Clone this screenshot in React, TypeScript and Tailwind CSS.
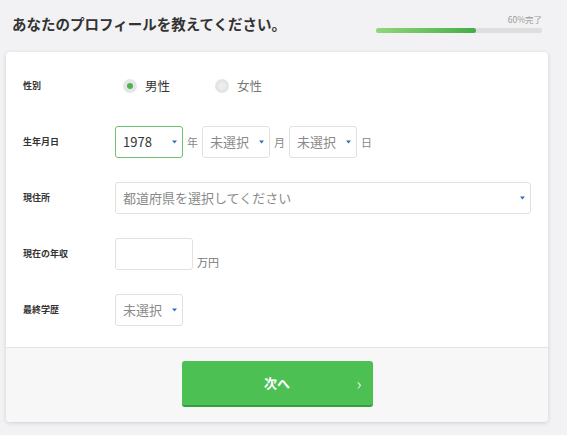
import React from 'react'

const font = { fontFamily: '"Noto Sans CJK JP", "Noto Sans", sans-serif' }

function Arrow() {
  return (
    <svg width="5" height="4" viewBox="0 0 5 4" className="shrink-0">
      <path d="M0 0.5 L5 0.5 L2.5 3.5 Z" fill="#2f6fb3" />
    </svg>
  )
}

function Select({ value, placeholder, width, active }: { value?: string; placeholder?: string; width: string; active?: boolean }) {
  return (
    <div
      className={`flex h-[32px] items-center justify-between rounded-[3px] border bg-white pl-[7px] pr-[5px] ${width} ${
        active ? 'border-[#6dc172]' : 'border-[#e1e1e1]'
      }`}
    >
      <span className={`text-[13px] ${value ? 'text-[#333]' : 'text-[#8a8a8a]'}`}>{value ?? placeholder}</span>
      <Arrow />
    </div>
  )
}

function Row({ label, children }: { label: string; children: React.ReactNode }) {
  return (
    <div className="flex h-[32px] items-center">
      <div className="w-[92px] shrink-0 text-[9px] font-bold text-[#333]">{label}</div>
      <div className="flex flex-1 items-center">{children}</div>
    </div>
  )
}

export default function App() {
  return (
    <div className="min-h-screen bg-[#f2f2f4]" style={font}>
      <div className="flex h-[52px] items-center justify-between pl-[12px] pr-[25px]">
        <h1 className="pb-[5px] text-[14.5px] font-bold text-[#333]">あなたのプロフィールを教えてください。</h1>
        <div className="flex w-[166px] flex-col items-end pb-[6px]">
          <span className="mb-[2px] text-[8.5px] text-[#9a9a9a]">60%完了</span>
          <div className="h-[5px] w-full rounded-full bg-[#dedede]">
            <div className="h-full w-[60%] rounded-full bg-gradient-to-r from-[#92d67c] to-[#3fae47]" />
          </div>
        </div>
      </div>

      <div className="ml-[6px] mr-[19px] overflow-hidden rounded-[4px] bg-white shadow-[0_1px_4px_rgba(0,0,0,0.15)]">
        <div className="flex flex-col gap-[24px] pb-[21px] pl-[17px] pr-[16px] pt-[18px]">
          <Row label="性別">
            <label className="ml-[8px] flex items-center">
              <span className="flex h-[14px] w-[14px] items-center justify-center rounded-full bg-[#e6e6e6]">
                <span className="h-[6px] w-[6px] rounded-full bg-[#4cb552]" />
              </span>
              <span className="ml-[8px] text-[12.5px] text-[#333]">男性</span>
            </label>
            <label className="ml-[45px] flex items-center">
              <span className="flex h-[14px] w-[14px] items-center justify-center rounded-full bg-[#e4e4e4]">
                <span className="h-[8px] w-[8px] rounded-full bg-[#ececec]" />
              </span>
              <span className="ml-[8px] text-[12.5px] text-[#777]">女性</span>
            </label>
          </Row>

          <Row label="生年月日">
            <Select value="1978" width="w-[68px]" active />
            <span className="mx-[4px] text-[11px] text-[#888]">年</span>
            <Select placeholder="未選択" width="w-[68px]" />
            <span className="mx-[4px] text-[11px] text-[#888]">月</span>
            <Select placeholder="未選択" width="w-[68px]" />
            <span className="mx-[4px] text-[11px] text-[#888]">日</span>
          </Row>

          <Row label="現住所">
            <Select placeholder="都道府県を選択してください" width="w-[416px]" />
          </Row>

          <Row label="現在の年収">
            <div className="flex items-end">
              <div className="h-[32px] w-[78px] rounded-[3px] border border-[#e1e1e1] bg-white" />
              <span className="ml-[4px] text-[11px] leading-[15px] text-[#777]">万円</span>
            </div>
          </Row>

          <Row label="最終学歴">
            <Select placeholder="未選択" width="w-[68px]" />
          </Row>
        </div>

        <div className="flex justify-center border-t border-[#e3e3e3] bg-[#f7f7f7] pb-[15px] pt-[13px]">
          <button className="relative flex h-[46px] w-[191px] items-center justify-center rounded-[3px] border-b-2 border-[#3a9c40] bg-[#4dc053] text-[13px] font-bold text-white">
            次へ
            <span className="absolute right-[11px] top-1/2 -translate-y-1/2 text-[17px] font-light">›</span>
          </button>
        </div>
      </div>
    </div>
  )
}
